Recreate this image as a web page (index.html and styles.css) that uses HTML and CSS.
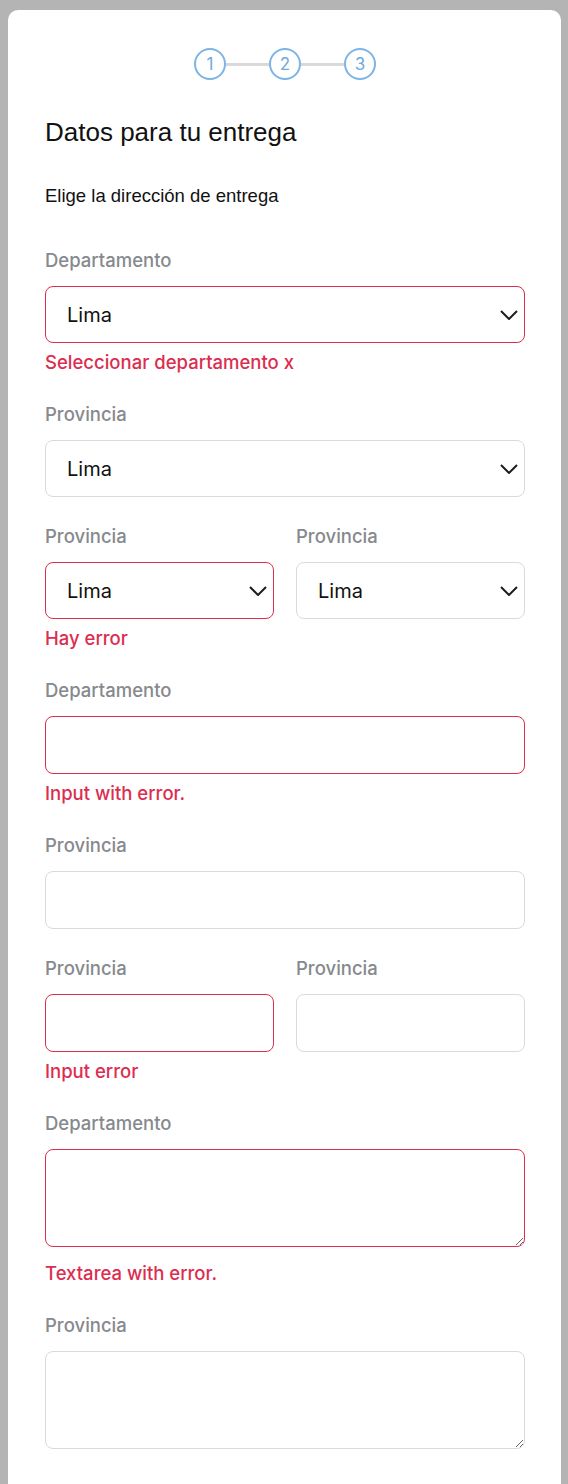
FILE: index.html
```html
<!DOCTYPE html>
<html lang="es">
<head>
<meta charset="utf-8">
<title>Datos para tu entrega</title>
<link rel="stylesheet" href="styles.css">
</head>
<body>
<div class="card">
  <div class="stepper">
    <span class="step">1</span><span class="step-line"></span><span class="step">2</span><span class="step-line"></span><span class="step">3</span>
  </div>
  <h1 class="title">Datos para tu entrega</h1>
  <p class="subtitle">Elige la dirección de entrega</p>

  <div class="field">
    <label class="label">Departamento</label>
    <div class="select-wrap">
      <select class="control select has-error"><option>Lima</option></select>
      <svg class="chevron" viewBox="0 0 18 10" width="18" height="10"><path d="M1 1l8 8 8-8" fill="none" stroke="#1d1d1f" stroke-width="2"/></svg>
    </div>
    <div class="error">Seleccionar departamento x</div>
  </div>

  <div class="field">
    <label class="label">Provincia</label>
    <div class="select-wrap">
      <select class="control select"><option>Lima</option></select>
      <svg class="chevron" viewBox="0 0 18 10" width="18" height="10"><path d="M1 1l8 8 8-8" fill="none" stroke="#1d1d1f" stroke-width="2"/></svg>
    </div>
  </div>

  <div class="row">
    <div class="field">
      <label class="label">Provincia</label>
      <div class="select-wrap">
        <select class="control select has-error"><option>Lima</option></select>
        <svg class="chevron" viewBox="0 0 18 10" width="18" height="10"><path d="M1 1l8 8 8-8" fill="none" stroke="#1d1d1f" stroke-width="2"/></svg>
      </div>
      <div class="error">Hay error</div>
    </div>
    <div class="field">
      <label class="label">Provincia</label>
      <div class="select-wrap">
        <select class="control select"><option>Lima</option></select>
        <svg class="chevron" viewBox="0 0 18 10" width="18" height="10"><path d="M1 1l8 8 8-8" fill="none" stroke="#1d1d1f" stroke-width="2"/></svg>
      </div>
    </div>
  </div>

  <div class="field">
    <label class="label">Departamento</label>
    <input class="control input has-error" type="text">
    <div class="error">Input with error.</div>
  </div>

  <div class="field">
    <label class="label">Provincia</label>
    <input class="control input" type="text">
  </div>

  <div class="row">
    <div class="field">
      <label class="label">Provincia</label>
      <input class="control input has-error" type="text">
      <div class="error">Input error</div>
    </div>
    <div class="field">
      <label class="label">Provincia</label>
      <input class="control input" type="text">
    </div>
  </div>

  <div class="field">
    <label class="label">Departamento</label>
    <textarea class="control textarea has-error"></textarea>
    <div class="error error-ta">Textarea with error.</div>
  </div>

  <div class="field">
    <label class="label">Provincia</label>
    <textarea class="control textarea"></textarea>
  </div>
</div>
</body>
</html>
```

FILE: styles.css
```css
html, body {
  margin: 0;
  padding: 0;
}
body {
  background: #b4b4b4;
  padding: 10px 7px 0 8px;
  font-family: Inter, "Noto Sans", sans-serif;
}
.card {
  background: linear-gradient(to bottom, #ffffff 0, #ffffff calc(100% - 32px), #f5f5f5 100%);
  border-radius: 10px 10px 0 0;
  padding: 38px 36px 36px 37px;
  min-height: 1436px;
  box-sizing: border-box;
}
.stepper {
  display: flex;
  align-items: center;
  justify-content: center;
}
.step {
  width: 32px;
  height: 32px;
  box-sizing: border-box;
  border: 2px solid #7db4e6;
  border-radius: 50%;
  color: #6fa9de;
  font-size: 17px;
  display: flex;
  align-items: center;
  justify-content: center;
  font-family: Inter, sans-serif;
}
.step-line {
  width: 43px;
  height: 3px;
  background: #d9d9d9;
}
.title {
  margin: 37px 0 0;
  font-family: "Liberation Sans", Arial, sans-serif;
  font-weight: 400;
  font-size: 26px;
  line-height: 30px;
  color: #111;
}
.subtitle {
  margin: 39px 0 0;
  font-family: "Liberation Sans", Arial, sans-serif;
  font-size: 18.5px;
  line-height: 20px;
  color: #111;
}
.subtitle + .field {
  margin-top: 44px;
}
.field {
  display: flex;
  flex-direction: column;
  margin-bottom: 29px;
}
.row {
  display: grid;
  grid-template-columns: 1fr 1fr;
  column-gap: 22px;
}
.row .field {
  min-width: 0;
}
.label {
  font-size: 18.5px;
  line-height: 20px;
  font-weight: 500;
  color: #86898d;
  margin-bottom: 16px;
}
.control {
  box-sizing: border-box;
  width: 100%;
  border: 1px solid #dadada;
  border-radius: 8px;
  background: #fff;
  font-family: Inter, sans-serif;
  outline: none;
  margin: 0;
}
.has-error {
  border-color: #dc2d50;
}
.select-wrap {
  position: relative;
}
.select {
  appearance: none;
  -webkit-appearance: none;
  height: 57px;
  padding: 0 40px 0 21px;
  font-size: 20px;
  color: #111;
  display: block;
}
.chevron {
  position: absolute;
  right: 7px;
  top: 24px;
  pointer-events: none;
}
.input {
  height: 58px;
  padding: 0 21px;
  font-size: 18px;
  display: block;
}
.textarea {
  height: 98px;
  padding: 12px 21px;
  font-size: 18px;
  display: block;
  resize: vertical;
}
.error {
  margin-top: 7px;
  margin-bottom: 1px;
  font-size: 18.5px;
  line-height: 24px;
  font-weight: 500;
  color: #dc2d50;
}
.error-ta {
  margin-top: 14px;
}
```
